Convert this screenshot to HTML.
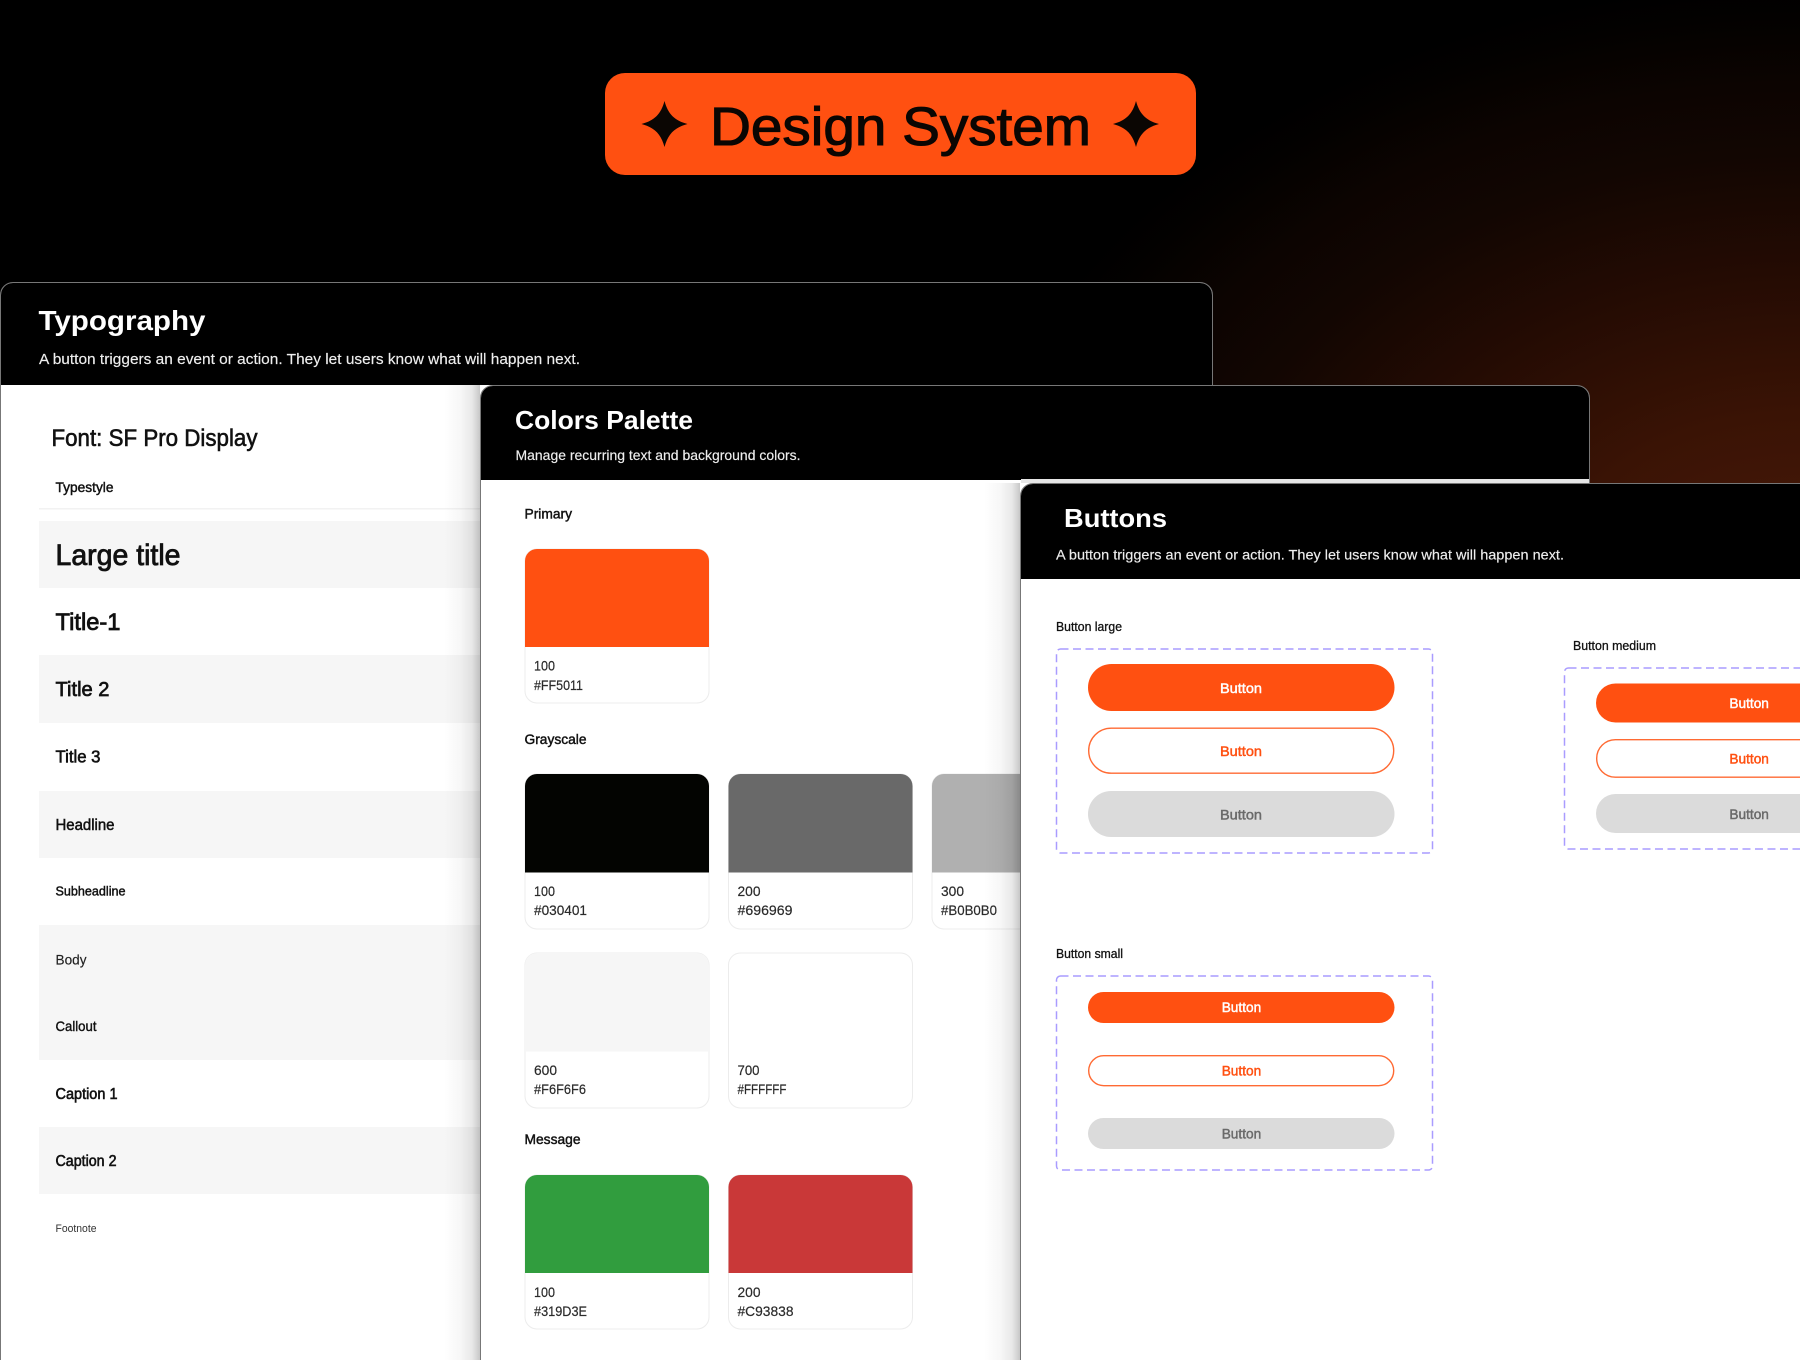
<!DOCTYPE html>
<html lang="en"><head><meta charset="utf-8"><title>Design System</title>
<style>
html,body{margin:0;padding:0;background:#000}
#p{position:relative;width:1800px;height:1360px;overflow:hidden;
background:radial-gradient(ellipse 850px 620px at 1800px 600px,#4a1a08 0,#3a1305 30%,#240b03 53%,#120602 72%,#0c0401 83%,#030100 94%,#000 100%)}
.panel{position:absolute;background:#fff;border:1px solid #777;border-radius:13px 13px 0 0;box-sizing:border-box;overflow:hidden}
.hd{position:absolute;left:0;top:0;right:0;background:#000}
.sh{position:absolute;width:36px;background:linear-gradient(to left,rgba(0,0,0,.22) 0,rgba(0,0,0,.09) 22%,rgba(0,0,0,.03) 55%,rgba(0,0,0,0) 100%)}
svg{position:absolute;left:0;top:0}
text{font-family:"Liberation Sans",sans-serif;fill:#111}
.w{fill:#fff;font-weight:700}
.s{fill:#eee;font-size:14px;stroke:#eee;stroke-width:.15px}
.m{stroke:#111;stroke-width:.4px}
.n{fill:#2a2a2a;font-size:14px;stroke:#2a2a2a;stroke-width:.18px}
</style></head><body><div id="p">

<svg width="1800" height="1360" viewBox="0 0 1800 1360">
<rect x="605" y="73" width="591" height="102" rx="20" fill="#FF5011"/>
<path transform="translate(664.5 124)" fill="#0b0603" d="M0-23C3.500-10 10-3.500 23 0 10 3.500 3.500 10 0 23-3.500 10-10 3.500-23 0-10-3.500-3.500-10 0-23Z"/>
<path transform="translate(1136 124)" fill="#0b0603" d="M0-23C3.500-10 10-3.500 23 0 10 3.500 3.500 10 0 23-3.500 10-10 3.500-23 0-10-3.500-3.500-10 0-23Z"/>
<text x="710" y="145" font-size="54" textLength="381" lengthAdjust="spacingAndGlyphs" style="fill:#0b0603;stroke:#0b0603;stroke-width:1.1px">Design System</text>
</svg>

<div class="panel" style="left:0;top:282px;width:1213px;height:1100px"><div class="hd" style="height:102px"></div></div>
<svg width="1800" height="1360" viewBox="0 0 1800 1360">
<text class="w" x="38.500" y="330" font-size="28" textLength="167" lengthAdjust="spacingAndGlyphs">Typography</text>
<text class="s" x="39" y="364" style="font-size:15px" textLength="541" lengthAdjust="spacingAndGlyphs">A button triggers an event or action. They let users know what will happen next.</text>
<text class="m" style="stroke-width:.6px" x="51.500" y="446" font-size="24" textLength="206" lengthAdjust="spacingAndGlyphs">Font: SF Pro Display</text>
<text class="m" style="stroke-width:.45px" x="55.500" y="492" font-size="14" textLength="58" lengthAdjust="spacingAndGlyphs">Typestyle</text>
<rect x="39" y="508" width="445" height="1.5" fill="#f2f2f2"/>
<g fill="#f6f6f6">
<rect x="39" y="521" width="445" height="67"/>
<rect x="39" y="655" width="445" height="68"/>
<rect x="39" y="791" width="445" height="67"/>
<rect x="39" y="925" width="445" height="135"/>
<rect x="39" y="1127" width="445" height="67"/>
</g>
<text class="m" style="stroke-width:.85px" x="55.500" y="565" font-size="30" textLength="125" lengthAdjust="spacingAndGlyphs">Large title</text>
<text class="m" style="stroke-width:.8px" x="55.500" y="630" font-size="24" textLength="65" lengthAdjust="spacingAndGlyphs">Title-1</text>
<text class="m" style="stroke-width:.7px" x="55.500" y="696" font-size="20.5" textLength="54" lengthAdjust="spacingAndGlyphs">Title 2</text>
<text class="m" style="stroke-width:.6px" x="55.500" y="762.500" font-size="17.5" textLength="45" lengthAdjust="spacingAndGlyphs">Title 3</text>
<text class="m" style="stroke-width:.5px" x="55.500" y="830" font-size="15.5" textLength="59" lengthAdjust="spacingAndGlyphs">Headline</text>
<text class="m" style="stroke-width:.45px" x="55.500" y="895.500" font-size="13" textLength="70" lengthAdjust="spacingAndGlyphs">Subheadline</text>
<text x="55.500" y="964.500" font-size="14" style="fill:#222;stroke:#222;stroke-width:.15px" textLength="31" lengthAdjust="spacingAndGlyphs">Body</text>
<text class="m" x="55.500" y="1031" font-size="14" textLength="41" lengthAdjust="spacingAndGlyphs">Callout</text>
<text class="m" style="stroke-width:.6px" x="55.500" y="1099" font-size="15.5" textLength="62" lengthAdjust="spacingAndGlyphs">Caption 1</text>
<text class="m" style="stroke-width:.6px" x="55.500" y="1166" font-size="15.5" textLength="61" lengthAdjust="spacingAndGlyphs">Caption 2</text>
<text x="55.500" y="1232" font-size="11" style="fill:#333" textLength="41" lengthAdjust="spacingAndGlyphs">Footnote</text>
</svg>

<div class="sh" style="left:444px;top:385px;height:975px"></div>
<div class="panel" style="left:480px;top:385px;width:1110px;height:1000px"><div class="hd" style="height:94px"></div></div>
<svg width="1800" height="1360" viewBox="0 0 1800 1360">
<rect x="1021" y="479" width="568" height="4" fill="#e6e6e6"/>
<text class="w" x="515" y="429" font-size="26" textLength="178" lengthAdjust="spacingAndGlyphs">Colors Palette</text>
<text class="s" x="515.500" y="460" textLength="285" lengthAdjust="spacingAndGlyphs">Manage recurring text and background colors.</text>
<text class="m" style="stroke-width:.45px" x="524.500" y="518.500" font-size="14" textLength="47.500" lengthAdjust="spacingAndGlyphs">Primary</text>
<text class="m" style="stroke-width:.45px" x="524.500" y="744" font-size="14" textLength="62" lengthAdjust="spacingAndGlyphs">Grayscale</text>
<text class="m" style="stroke-width:.45px" x="524.500" y="1144" font-size="14" textLength="56" lengthAdjust="spacingAndGlyphs">Message</text>
<g fill="#fff" stroke="#ececec">
<rect x="525" y="549" width="184" height="154" rx="12"/>
<rect x="525" y="774" width="184" height="155" rx="12"/>
<rect x="728.5" y="774" width="184" height="155" rx="12"/>
<rect x="932" y="774" width="184" height="155" rx="12"/>
<rect x="525" y="953" width="184" height="155" rx="12"/>
<rect x="728.5" y="953" width="184" height="155" rx="12"/>
<rect x="525" y="1175" width="184" height="154" rx="12"/>
<rect x="728.5" y="1175" width="184" height="154" rx="12"/>
</g>
<path fill="#FF5011" d="M525 561a12 12 0 0 1 12-12H697a12 12 0 0 1 12 12V647H525Z"/>
<path fill="#030401" d="M525 786a12 12 0 0 1 12-12H697a12 12 0 0 1 12 12V872.500H525Z"/>
<path fill="#696969" d="M728.500 786a12 12 0 0 1 12-12H900.500a12 12 0 0 1 12 12V872.500H728.500Z"/>
<path fill="#B0B0B0" d="M932 786a12 12 0 0 1 12-12H1104a12 12 0 0 1 12 12V872.500H932Z"/>
<path fill="#F6F6F6" d="M525 965a12 12 0 0 1 12-12H697a12 12 0 0 1 12 12V1051.500H525Z"/>
<path fill="#319D3E" d="M525 1187a12 12 0 0 1 12-12H697a12 12 0 0 1 12 12V1273H525Z"/>
<path fill="#C93838" d="M728.500 1187a12 12 0 0 1 12-12H900.500a12 12 0 0 1 12 12V1273H728.500Z"/>
<text class="n" x="534" y="670.500" textLength="21" lengthAdjust="spacingAndGlyphs">100</text>
<text class="n" x="534" y="690" textLength="49" lengthAdjust="spacingAndGlyphs">#FF5011</text>
<text class="n" x="534" y="896" textLength="21" lengthAdjust="spacingAndGlyphs">100</text>
<text class="n" x="534" y="915" textLength="53" lengthAdjust="spacingAndGlyphs">#030401</text>
<text class="n" x="737.500" y="896" textLength="23" lengthAdjust="spacingAndGlyphs">200</text>
<text class="n" x="737.500" y="915" textLength="55" lengthAdjust="spacingAndGlyphs">#696969</text>
<text class="n" x="941" y="896" textLength="23" lengthAdjust="spacingAndGlyphs">300</text>
<text class="n" x="941" y="915" textLength="56" lengthAdjust="spacingAndGlyphs">#B0B0B0</text>
<text class="n" x="534" y="1075" textLength="23" lengthAdjust="spacingAndGlyphs">600</text>
<text class="n" x="534" y="1094" textLength="52" lengthAdjust="spacingAndGlyphs">#F6F6F6</text>
<text class="n" x="737.500" y="1075" textLength="22" lengthAdjust="spacingAndGlyphs">700</text>
<text class="n" x="737.500" y="1094" textLength="49" lengthAdjust="spacingAndGlyphs">#FFFFFF</text>
<text class="n" x="534" y="1297" textLength="21" lengthAdjust="spacingAndGlyphs">100</text>
<text class="n" x="534" y="1316" textLength="53" lengthAdjust="spacingAndGlyphs">#319D3E</text>
<text class="n" x="737.500" y="1297" textLength="23" lengthAdjust="spacingAndGlyphs">200</text>
<text class="n" x="737.500" y="1316" textLength="56" lengthAdjust="spacingAndGlyphs">#C93838</text>
</svg>

<div class="sh" style="left:984px;top:483px;height:877px"></div>
<div class="panel" style="left:1020px;top:483px;width:800px;height:900px"><div class="hd" style="height:95px"></div></div>
<svg width="1800" height="1360" viewBox="0 0 1800 1360">
<text class="w" x="1064" y="527" font-size="26" textLength="103" lengthAdjust="spacingAndGlyphs">Buttons</text>
<text class="s" x="1056" y="559.500" textLength="508" lengthAdjust="spacingAndGlyphs">A button triggers an event or action. They let users know what will happen next.</text>
<text class="m" style="stroke-width:.3px" x="1056" y="631" font-size="13" textLength="66" lengthAdjust="spacingAndGlyphs">Button large</text>
<text class="m" style="stroke-width:.3px" x="1573" y="650" font-size="13" textLength="83" lengthAdjust="spacingAndGlyphs">Button medium</text>
<text class="m" style="stroke-width:.3px" x="1056" y="958" font-size="13" textLength="67" lengthAdjust="spacingAndGlyphs">Button small</text>
<g fill="none" stroke="#a99cff" stroke-width="1.500" stroke-dasharray="8 4.500">
<rect x="1056.500" y="649" width="376" height="204" rx="4"/>
<rect x="1564.500" y="668" width="300" height="181" rx="4"/>
<rect x="1056.500" y="976" width="376" height="194" rx="4"/>
</g>
<rect x="1088" y="664" width="306.500" height="47" rx="23.500" fill="#FF5011"/>
<rect x="1088.700" y="728.200" width="305" height="45" rx="22.500" fill="#fff" stroke="#FF6A33" stroke-width="1.400"/>
<rect x="1088" y="791" width="306.500" height="46" rx="23" fill="#DBDBDB"/>
<rect x="1596" y="683.500" width="306" height="39" rx="19.500" fill="#FF5011"/>
<rect x="1596.700" y="739.700" width="305" height="37.500" rx="18.700" fill="#fff" stroke="#FF6A33" stroke-width="1.400"/>
<rect x="1596" y="794" width="306" height="39" rx="19.500" fill="#DBDBDB"/>
<rect x="1088" y="992" width="306.500" height="31" rx="15.500" fill="#FF5011"/>
<rect x="1088.700" y="1055.700" width="305" height="30" rx="15" fill="#fff" stroke="#FF6A33" stroke-width="1.400"/>
<rect x="1088" y="1118" width="306.500" height="31" rx="15.500" fill="#DBDBDB"/>
<g font-size="14">
<text x="1220" y="693" style="fill:#fff;stroke:#fff;stroke-width:.45px" textLength="42" lengthAdjust="spacingAndGlyphs">Button</text>
<text x="1220" y="756" style="fill:#FF5011;stroke:#FF5011;stroke-width:.45px" textLength="42" lengthAdjust="spacingAndGlyphs">Button</text>
<text x="1220" y="819.500" style="fill:#6a6a6a;stroke:#6a6a6a;stroke-width:.45px" textLength="42" lengthAdjust="spacingAndGlyphs">Button</text>
<text x="1729.400" y="708" style="fill:#fff;stroke:#fff;stroke-width:.45px" textLength="39.500" lengthAdjust="spacingAndGlyphs">Button</text>
<text x="1729.400" y="763.500" style="fill:#FF5011;stroke:#FF5011;stroke-width:.45px" textLength="39.500" lengthAdjust="spacingAndGlyphs">Button</text>
<text x="1729.400" y="819" style="fill:#6a6a6a;stroke:#6a6a6a;stroke-width:.45px" textLength="39.500" lengthAdjust="spacingAndGlyphs">Button</text>
<text x="1221.700" y="1012" style="fill:#fff;stroke:#fff;stroke-width:.45px" textLength="39.500" lengthAdjust="spacingAndGlyphs">Button</text>
<text x="1221.700" y="1075.500" style="fill:#FF5011;stroke:#FF5011;stroke-width:.45px" textLength="39.500" lengthAdjust="spacingAndGlyphs">Button</text>
<text x="1221.700" y="1138.500" style="fill:#6a6a6a;stroke:#6a6a6a;stroke-width:.45px" textLength="39.500" lengthAdjust="spacingAndGlyphs">Button</text>
</g>
</svg>
</div></body></html>
